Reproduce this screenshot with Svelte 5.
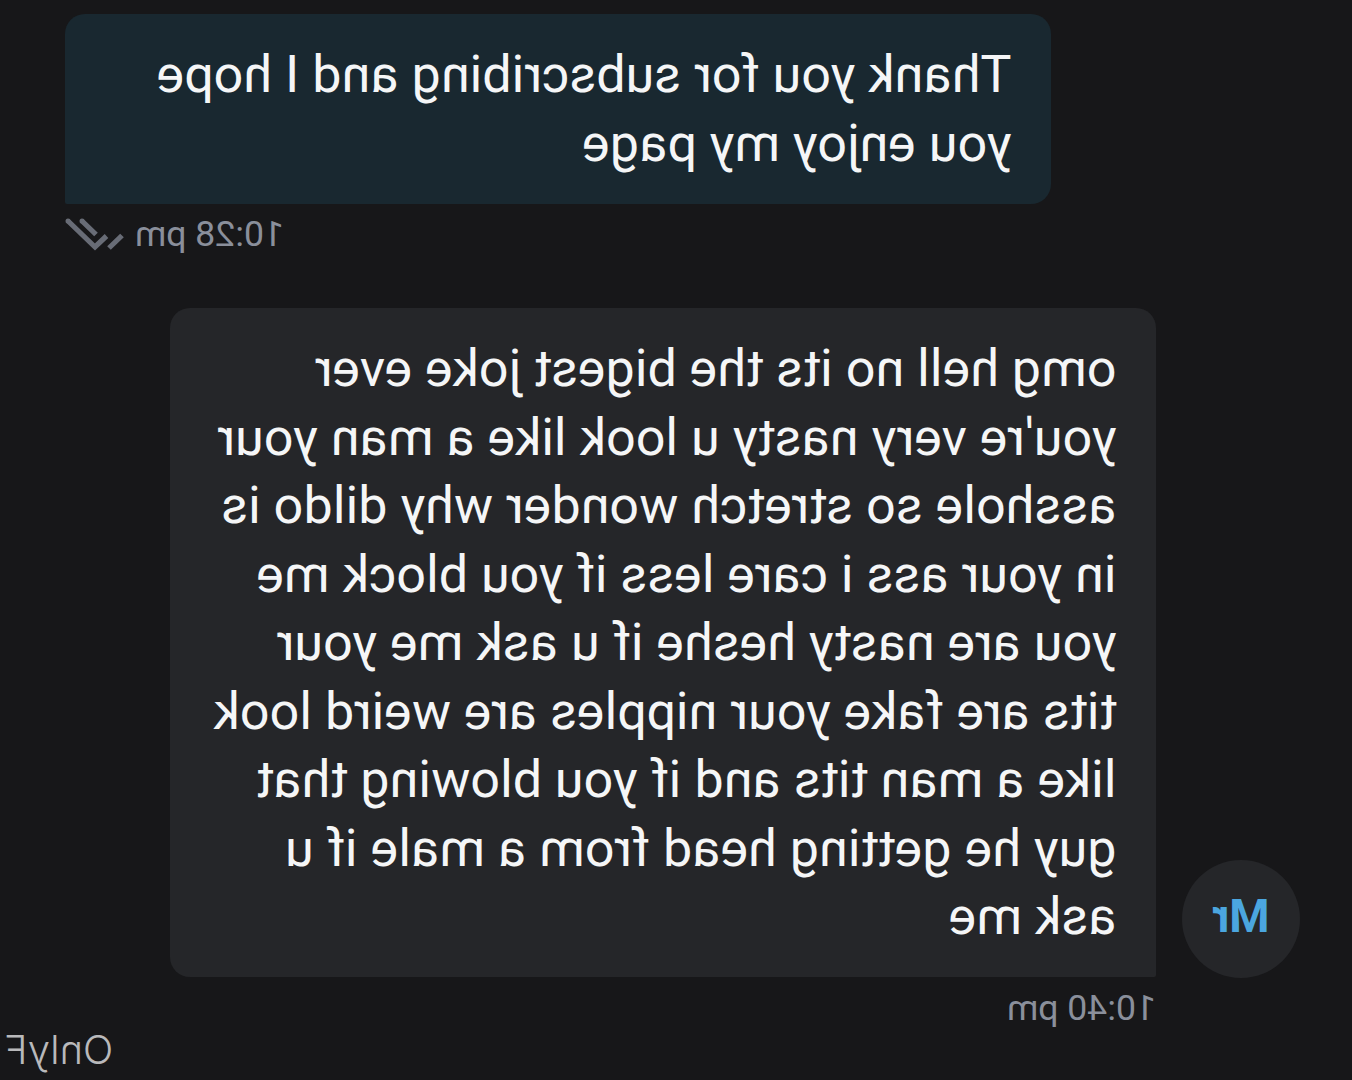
<script>
const sent = {
    lines: ["Thank you for subscribing and I hope", "you enjoy my page"],
    time: "10:28 pm"
};

const received = {
    lines: [
        "omg hell no its the bigest joke ever",
        "you're very nasty u look like a man your",
        "asshole so stretch wonder why dildo is",
        "in your ass i care less if you block me",
        "you are nasty heshe if u ask me your",
        "tits are fake your nipples are weird look",
        "like a man tits and if you blowing that",
        "guy he getting head from a male if u",
        "ask me"
    ],
    time: "10:40 pm"
};
</script>

<!-- the whole chat is flipped horizontally -->
<main class="chat">

<section class="message sent">
<div class="bubble">
{#each sent.lines as line}
<p>{line}</p>
{/each}
</div>
<div class="meta">
<span>{sent.time}</span>
<svg class="checks" width="60" height="36" viewBox="0 0 60 36">
<path d="M57.5 4.5L30 31L18.5 20M43.5 4.5L29 18.5M3 19.5L16 32" />
<circle cx="57" cy="5" r="2.5" />
<circle cx="43" cy="5" r="2.5" />
</svg>
</div>
</section>

<section class="message received">
<div class="avatar">Mr</div>
<div class="body">
<div class="bubble">
{#each received.lines as line}
<p>{line}</p>
{/each}
</div>
<div class="meta">
<span>{received.time}</span>
</div>
</div>
</section>

<footer>OnlyF</footer>

</main>

<style>
:global(body){
background:#171719;
overflow:hidden;
}

.chat{
box-sizing:border-box;
width:1352px;
height:1080px;
padding-top:14px;
overflow:hidden;
display:flex;
flex-direction:column;
transform:scaleX(-1);
background:#171719;
font-family:Roboto, sans-serif;
color:#f5f6f7;
}

.bubble{
box-sizing:border-box;
width:986px;
padding:27px 39.5px 24px;
border-radius:20px;
font-size:52px;
letter-spacing:0.06px;
line-height:68.5px;
}

p{
margin:0;
white-space:nowrap;
}

.sent{
height:294px;
display:flex;
flex-direction:column;
align-items:flex-end;
padding-right:65px;
}

.sent .bubble{
height:190px;
border-bottom-right-radius:2px;
background:#192830;
}

.received{
display:flex;
align-items:flex-start;
padding-left:52px;
gap:26px;
}

.received .bubble{
height:669px;
border-bottom-left-radius:2px;
background:#252629;
}

.avatar{
box-sizing:border-box;
width:118px;
height:118px;
margin-top:552px;
padding-bottom:6px;
border-radius:50%;
display:flex;
align-items:center;
justify-content:center;
background:#252629;
color:#4ba6df;
font-size:46px;
font-weight:700;
line-height:1;
}

.meta{
display:flex;
align-items:center;
gap:10px;
height:60px;
font-size:35.7px;
line-height:60px;
color:#8a8f9b;
}

.received .meta{
padding-top:1px;
height:59px;
}

.checks{
fill:none;
stroke:#686c76;
stroke-width:5.2;
}

.checks circle{
fill:#686c76;
stroke:none;
}

footer{
margin-left:auto;
padding-right:4px;
margin-top:-11px;
font-family:Inter, sans-serif;
font-size:40px;
font-weight:300;
line-height:48px;
color:#b9b9bb;
}
</style>
